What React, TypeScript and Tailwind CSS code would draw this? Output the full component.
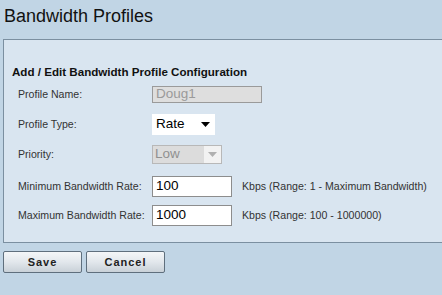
import React from "react";

const Label = ({ children }: { children: React.ReactNode }) => (
  <div className="w-[148px] shrink-0 whitespace-nowrap pl-[14px] text-[10.6px] text-[#333]">{children}</div>
);

const Arrow = ({ color }: { color: string }) => (
  <svg width="9" height="5" viewBox="0 0 9 5">
    <polygon points="0,0 9,0 4.5,5" fill={color} />
  </svg>
);

export default function App() {
  return (
    <div
      className="w-[442px] h-[295px] overflow-hidden bg-[#c1d5e5]"
      style={{ fontFamily: '"Liberation Sans", Arial, sans-serif' }}
    >
      <div className="h-[39px] pl-[4px] pt-[5px] text-[18px] leading-[22px] text-[#111]">
        Bandwidth Profiles
      </div>
      <div className="ml-[3px] h-[204px] border-l border-t border-b border-[#7b8fa0] bg-[#d9e5f0]">
        <div className="pl-[8px] pt-[25px] text-[11.6px] font-bold leading-[14px] text-[#111]">
          Add / Edit Bandwidth Profile Configuration
        </div>
        <div className="flex flex-col">
          <div className="mt-[7px] flex h-[17px] items-center">
            <Label>Profile Name:</Label>
            <div className="flex h-[17px] w-[110px] items-center border border-[#9a9a9a] bg-[#dedede] pl-[3px] text-[13.5px] text-[#9a9a9a]">
              Doug1
            </div>
          </div>
          <div className="mt-[11px] flex h-[21px] items-center">
            <Label>Profile Type:</Label>
            <div className="flex h-[21px] w-[63px] items-center justify-between bg-white pl-[4px] pr-[5px] text-[13.5px] text-black">
              <span>Rate</span>
              <Arrow color="#000" />
            </div>
          </div>
          <div className="mt-[10px] flex h-[19px] items-center">
            <Label>Priority:</Label>
            <div className="flex h-[19px] w-[70px] items-center border border-[#b8b8b8] bg-[#f2f2f2]">
              <div className="flex h-full w-[51px] items-center bg-[#dcdcdc] pl-[2px] text-[13.5px] text-[#909090]">
                Low
              </div>
              <div className="flex flex-1 items-center justify-center">
                <Arrow color="#b0b0b0" />
              </div>
            </div>
          </div>
          <div className="mt-[12px] flex h-[21px] items-center">
            <Label>Minimum Bandwidth Rate:</Label>
            <div className="flex h-[21px] w-[80px] items-center border border-[#8d8d8d] bg-white pl-[3px] text-[13.5px] text-black">
              100
            </div>
            <div className="pl-[10px] text-[10.6px] text-[#333]">Kbps (Range: 1 - Maximum Bandwidth)</div>
          </div>
          <div className="mt-[8px] flex h-[21px] items-center">
            <Label>Maximum Bandwidth Rate:</Label>
            <div className="flex h-[21px] w-[80px] items-center border border-[#8d8d8d] bg-white pl-[3px] text-[13.5px] text-black">
              1000
            </div>
            <div className="pl-[10px] text-[10.6px] text-[#333]">Kbps (Range: 100 - 1000000)</div>
          </div>
        </div>
      </div>
      <div className="mt-[8px] flex gap-[4px] pl-[3px]">
        <button className="flex h-[22px] w-[79px] items-center justify-center rounded-[2px] border border-[#5f6f7d] bg-gradient-to-b from-[#f4f6f8] via-[#e2e7ec] to-[#c9d1d8] text-[11px] font-bold tracking-[1px] text-[#222]">
          Save
        </button>
        <button className="flex h-[22px] w-[79px] items-center justify-center rounded-[2px] border border-[#5f6f7d] bg-gradient-to-b from-[#f4f6f8] via-[#e2e7ec] to-[#c9d1d8] text-[11px] font-bold tracking-[1px] text-[#222]">
          Cancel
        </button>
      </div>
    </div>
  );
}
